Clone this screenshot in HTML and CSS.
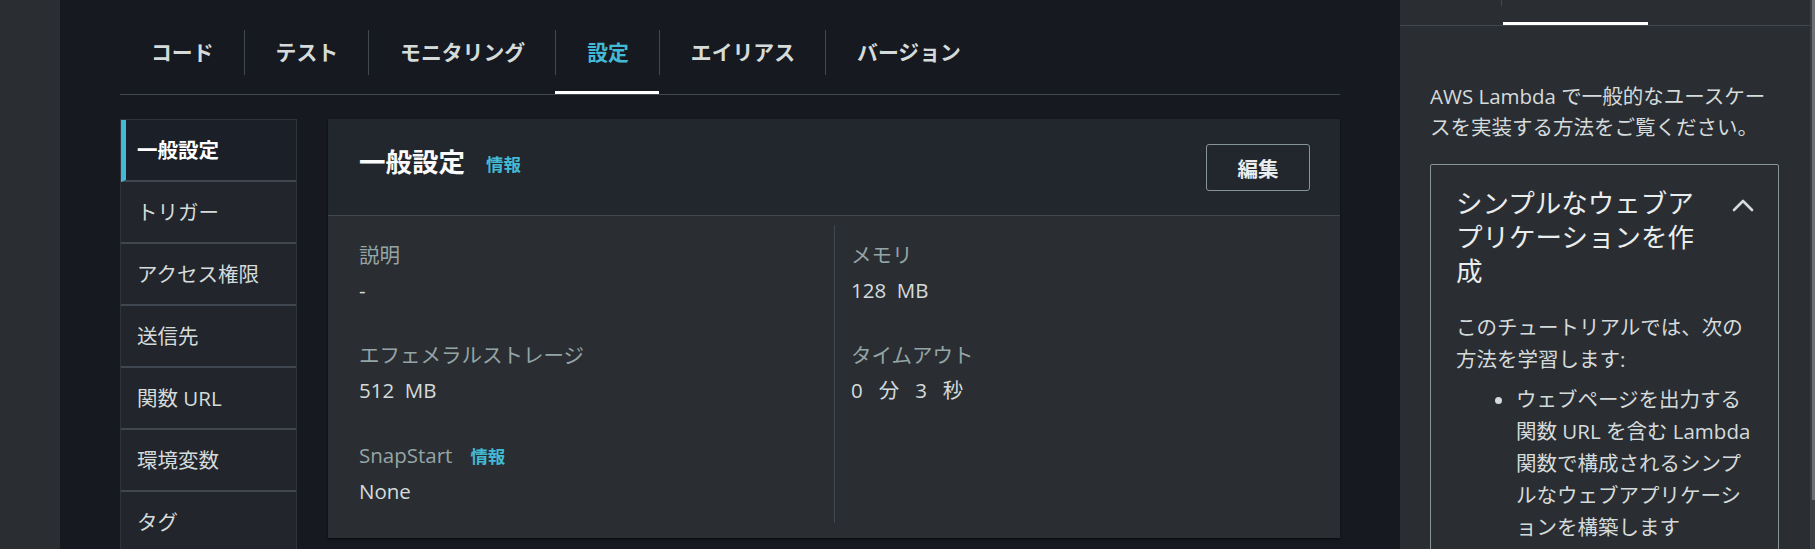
FILE: index.html
```html
<!DOCTYPE html>
<html lang="ja">
<head>
<meta charset="utf-8">
<title>Lambda 設定</title>
<link rel="stylesheet" href="styles.css">
</head>
<body>
<div class="app">
  <div class="leftbar"></div>
  <main class="main">
    <nav class="tabs">
      <a class="tab"><span class="tab-label">コード</span></a>
      <a class="tab"><span class="tab-label sep">テスト</span></a>
      <a class="tab"><span class="tab-label sep">モニタリング</span></a>
      <a class="tab active"><span class="tab-label sep">設定</span></a>
      <a class="tab"><span class="tab-label sep">エイリアス</span></a>
      <a class="tab"><span class="tab-label sep">バージョン</span></a>
    </nav>
    <div class="content">
      <ul class="sidenav">
        <li class="side-item active">一般設定</li>
        <li class="side-item">トリガー</li>
        <li class="side-item">アクセス権限</li>
        <li class="side-item">送信先</li>
        <li class="side-item">関数 URL</li>
        <li class="side-item">環境変数</li>
        <li class="side-item">タグ</li>
      </ul>
      <section class="card">
        <header class="card-header">
          <h2 class="card-title">一般設定<a class="info info-title">情報</a></h2>
          <button class="btn">編集</button>
        </header>
        <div class="card-body">
          <div class="col">
            <div class="field"><div class="label">説明</div><div class="value">-</div></div>
            <div class="field"><div class="label">エフェメラルストレージ</div><div class="value">512&nbsp; MB</div></div>
            <div class="field"><div class="label">SnapStart<a class="info info-label">情報</a></div><div class="value">None</div></div>
          </div>
          <div class="col col-right">
            <div class="field"><div class="label">メモリ</div><div class="value">128&nbsp; MB</div></div>
            <div class="field"><div class="label">タイムアウト</div><div class="value">0&nbsp;&nbsp; 分&nbsp;&nbsp; 3&nbsp;&nbsp; 秒</div></div>
          </div>
        </div>
      </section>
    </div>
  </main>
  <aside class="panel">
    <div class="panel-tabs"><div class="ptab-a"></div><div class="ptab-b"></div></div>
    <div class="panel-body">
      <p class="panel-intro">AWS Lambda で一般的なユースケースを実装する方法をご覧ください。</p>
      <div class="tut">
        <div class="tut-head">
          <h3 class="tut-title">シンプルなウェブアプリケーションを作成</h3>
          <svg class="chev" width="22" height="14" viewBox="0 0 22 14"><polyline points="2,12 11,3 20,12" fill="none" stroke="#d5dbdb" stroke-width="2.6" stroke-linecap="round" stroke-linejoin="round"/></svg>
        </div>
        <p class="tut-text">このチュートリアルでは、次の方法を学習します:</p>
        <ul class="tut-list">
          <li>ウェブページを出力する関数 URL を含む Lambda 関数で構成されるシンプルなウェブアプリケーションを構築します</li>
        </ul>
      </div>
    </div>
  </aside>
  <div class="scrollbar"><div class="thumb"></div></div>
</div>
</body>
</html>
```

FILE: styles.css
```css
* { box-sizing: border-box; }
html, body {
  margin: 0;
  padding: 0;
  height: 549px;
  overflow: hidden;
  background: #16191f;
  font-family: "Open Sans", "Noto Sans CJK JP", sans-serif;
  color: #d5dbdb;
}
.app {
  display: flex;
  height: 549px;
}
.leftbar {
  width: 60px;
  flex: none;
  background: #2a2d31;
}
.main {
  width: 1340px;
  flex: none;
  padding: 0 60px;
  background: #16191f;
}
.tabs {
  display: flex;
  padding-top: 30px;
  border-bottom: 1px solid #414750;
}
.tab {
  display: block;
  padding-bottom: 16px;
  border-bottom: 3px solid transparent;
  color: #d5dbdb;
  font-weight: 700;
  font-size: 20.85px;
}
.tab.active {
  border-bottom-color: #ffffff;
  color: #44b9d6;
}
.tab-label {
  display: block;
  height: 45px;
  line-height: 45px;
  padding: 0 30px 0 31px;
}
.tab-label.sep {
  border-left: 1px solid #414750;
}
.content {
  display: flex;
  align-items: flex-start;
  margin-top: 24px;
}
.sidenav {
  list-style: none;
  margin: 0;
  padding: 0;
  width: 177px;
  flex: none;
  border: 1px solid #30343a;
  background: #22262c;
}
.side-item {
  height: 62px;
  line-height: 60px;
  padding-left: 16px;
  border-bottom: 2px solid #414750;
  font-size: 20.5px;
  color: #d5dbdb;
}
.side-item.active {
  background: #1b1f27;
  border-left: 5px solid #44b9d6;
  padding-left: 11px;
  font-weight: 700;
  color: #ffffff;
}
.card {
  flex: 1;
  margin-left: 31px;
  background: #2a2e33;
  box-shadow: 0 1px 2px rgba(0, 0, 0, 0.6);
}
.card-header {
  display: flex;
  justify-content: space-between;
  align-items: flex-start;
  padding: 25px 30px 24px 31px;
  background: #22262d;
  border-bottom: 1px solid #414750;
}
.card-title {
  margin: 0;
  font-size: 26.5px;
  line-height: 36px;
  font-weight: 700;
  color: #fafafa;
}
.info {
  color: #44b9d6;
  font-weight: 700;
}
.info-title {
  font-size: 17.5px;
  margin-left: 21px;
  position: relative;
  top: -1px;
}
.info-label {
  font-size: 17.5px;
  margin-left: 18px;
}
.btn {
  width: 104px;
  height: 47px;
  border: 1px solid #879596;
  border-radius: 3px;
  background: transparent;
  color: #eaeded;
  font-family: "Open Sans", "Noto Sans CJK JP", sans-serif;
  font-size: 20.5px;
  font-weight: 700;
  padding: 0;
}
.card-body {
  display: grid;
  grid-template-columns: 1fr 1fr;
  padding: 9px 31px 15px;
}
.col {
  padding: 15px 16px 17px 0;
}
.col-right {
  border-left: 1px solid #414750;
  padding-left: 16px;
}
.field + .field {
  margin-top: 35px;
}
.label {
  font-size: 20.5px;
  line-height: 30px;
  color: #95a5a6;
}
.value {
  margin-top: 5px;
  font-size: 20.5px;
  line-height: 30px;
  color: #d5dbdb;
}
.panel {
  width: 410px;
  flex: none;
  background: #2a2e33;
}
.panel-tabs {
  display: flex;
  align-items: flex-start;
  height: 26px;
  border-bottom: 1px solid #414750;
}
.ptab-a {
  width: 102px;
  height: 6px;
  border-right: 1px solid #414750;
}
.ptab-b {
  width: 145px;
  height: 25px;
  margin-left: 1px;
  border-bottom: 3px solid #ffffff;
}
.panel-body {
  padding: 55px 31px 0 30px;
  font-size: 20.5px;
}
.panel-intro {
  margin: 0;
  line-height: 31px;
}
.tut {
  margin-top: 21px;
  border: 1px solid #879596;
  border-radius: 2px;
  padding: 21px 24px 40px 25px;
}
.tut-head {
  display: flex;
  gap: 20px;
  align-items: flex-start;
}
.tut-title {
  flex: 1;
  margin: 0;
  font-size: 26.5px;
  line-height: 34px;
  font-weight: 400;
  color: #eaeded;
}
.chev {
  flex: none;
  margin-top: 12px;
}
.tut-text {
  margin: 23px 0 0;
  line-height: 32px;
}
.tut-list {
  margin: 8px 0 0;
  padding-left: 60px;
  line-height: 32px;
}
.scrollbar {
  width: 5px;
  flex: none;
  background: #3b3e42;
  padding-left: 2px;
}
.thumb {
  width: 3px;
  height: 500px;
  background: #6e7175;
}
```
